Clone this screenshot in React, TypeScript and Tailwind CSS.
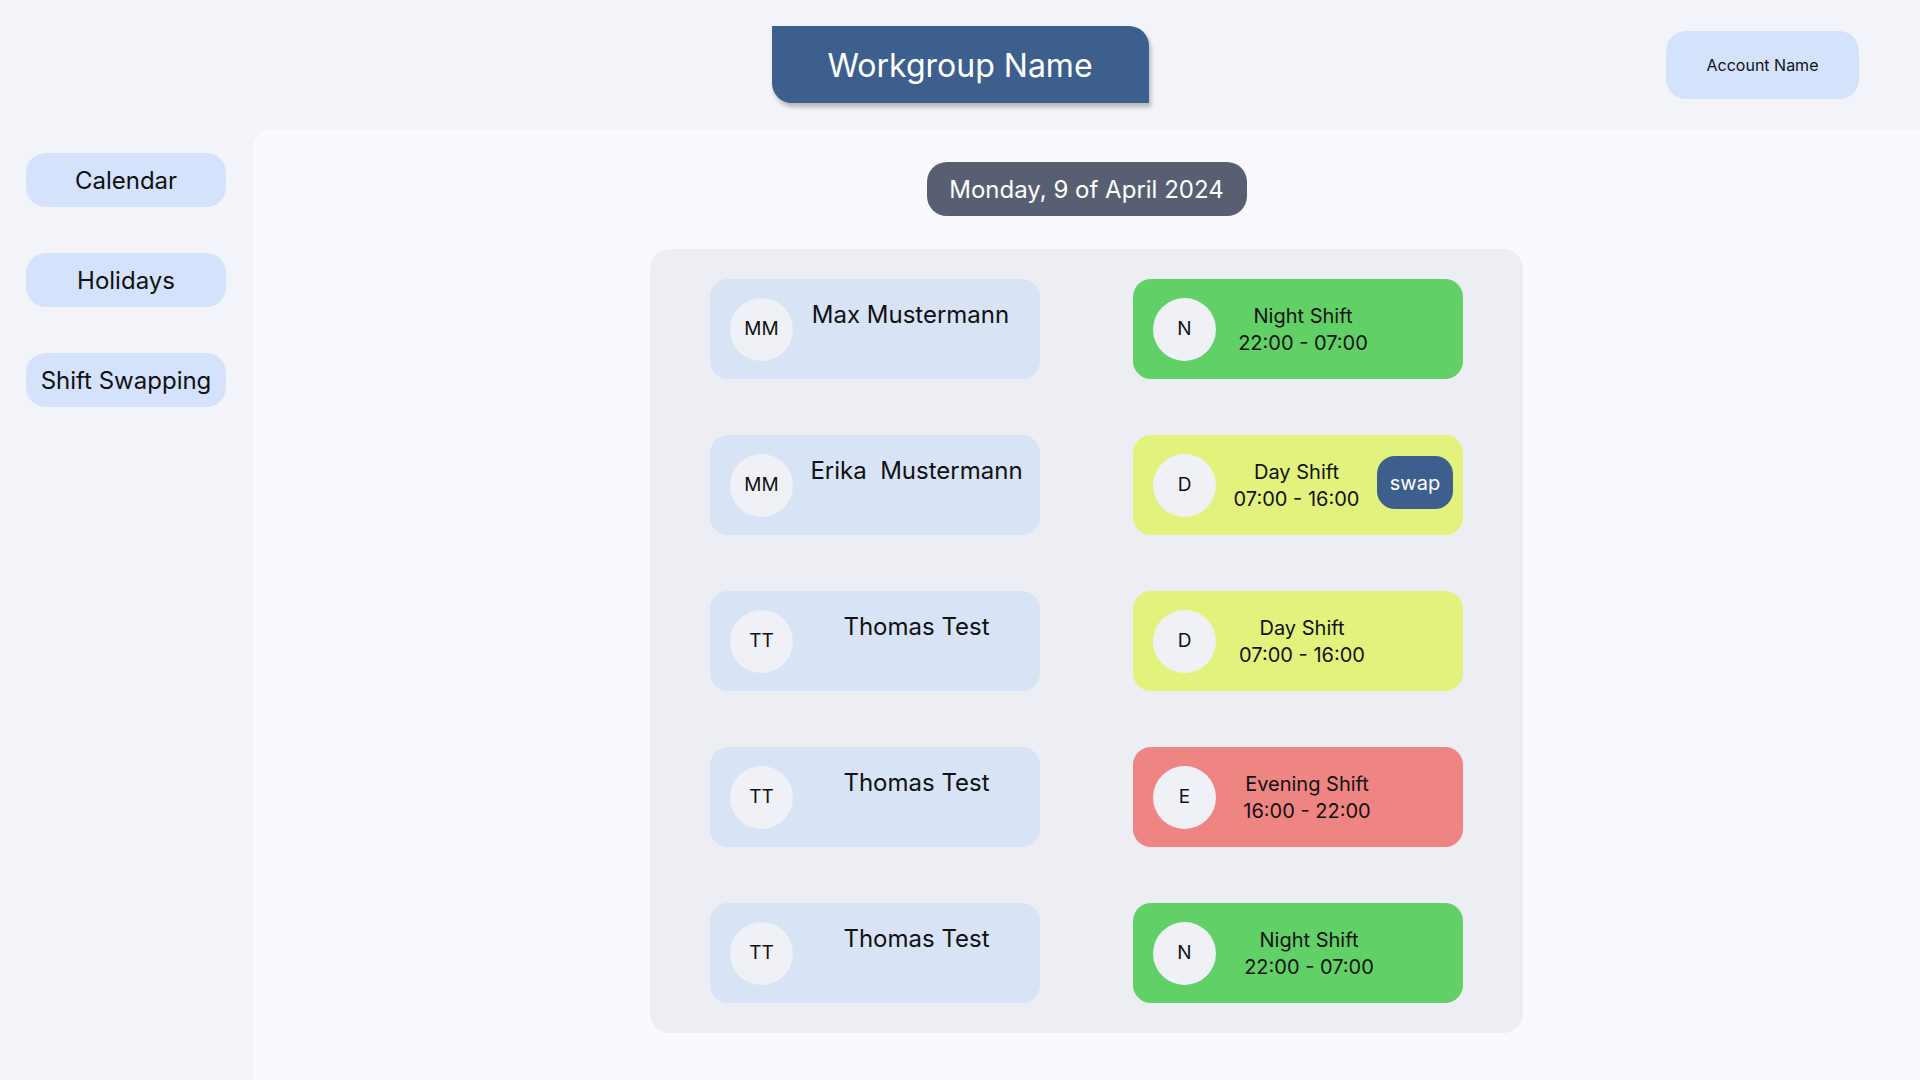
import React from 'react';

type Shift = 'night' | 'day' | 'evening';

interface Row {
    initials: string;
    name: string;
    shift: Shift;
    nameCls: string;
    textCls: string;
    swap?: boolean;
}

// text blocks are not perfectly aligned in the design, so each row keeps its own width
const rows: Row[] = [
    { initials: 'MM', name: 'Max Mustermann', shift: 'night', nameCls: 'pr-[12px]', textCls: 'w-[174px]' },
    { initials: 'MM', name: 'Erika\u00a0 Mustermann', shift: 'day', nameCls: '', textCls: 'w-[161px]', swap: true },
    { initials: 'TT', name: 'Thomas Test', shift: 'day', nameCls: '', textCls: 'w-[172px]' },
    { initials: 'TT', name: 'Thomas Test', shift: 'evening', nameCls: '', textCls: 'w-[182px]' },
    { initials: 'TT', name: 'Thomas Test', shift: 'night', nameCls: '', textCls: 'w-[186px]' },
];

const shiftInfo: Record<Shift, { letter: string; label: string; time: string; bg: string }> = {
    night: { letter: 'N', label: 'Night Shift', time: '22:00 - 07:00', bg: 'bg-[#61d067]' },
    day: { letter: 'D', label: 'Day Shift', time: '07:00 - 16:00', bg: 'bg-[#e2f27d]' },
    evening: { letter: 'E', label: 'Evening Shift', time: '16:00 - 22:00', bg: 'bg-[#ee8583]' },
};

const navItems = ['Calendar', 'Holidays', 'Shift Swapping'];

const Avatar: React.FC<{ text: string }> = ({ text }) => (
    <div className="w-[63px] h-[63px] shrink-0 rounded-full bg-[#f0f1f6] flex items-center justify-center text-[19px] text-[#111]">
        {text}
    </div>
);

const App: React.FC = () => {
    return (
        <div className="h-screen w-full overflow-hidden bg-[#f2f4f9] font-['Inter','Liberation_Sans',sans-serif] text-[#111] flex flex-col">
            {/* Top bar */}
            <header className="h-[130px] shrink-0 grid grid-cols-[1fr_auto_1fr] items-start">
                <div />
                <div className="mt-[26px] w-[377px] h-[77px] pt-[2px] bg-[#3d5f8e] text-white text-[32px] flex items-center justify-center rounded-tr-[20px] rounded-bl-[20px] shadow-[2px_4px_4px_rgba(0,0,0,0.25)]">
                    Workgroup Name
                </div>
                <div className="flex justify-end pr-[61px] pt-[31px]">
                    <div className="w-[193px] h-[68px] rounded-[20px] bg-[#d4e2fc] flex items-center justify-center text-[16px]">
                        Account Name
                    </div>
                </div>
            </header>

            <div className="flex flex-1 min-h-0">
                {/* Sidebar */}
                <aside className="w-[253px] shrink-0 pl-[26px] pt-[23px] flex flex-col gap-[46px]">
                    {navItems.map(item => (
                        <div
                            key={item}
                            className="w-[200px] h-[54px] pt-[2px] rounded-[20px] bg-[#d4e2fc] flex items-center justify-center text-[24px]"
                        >
                            {item}
                        </div>
                    ))}
                </aside>

                {/* Main */}
                <main className="flex-1 bg-[#f9f9fe] rounded-tl-[16px] flex flex-col items-center pt-[32px]">
                    <div className="w-[320px] h-[54px] pt-[2px] rounded-[20px] bg-[#585f72] text-white text-[24px] flex items-center justify-center">
                        Monday, 9 of April 2024
                    </div>

                    <div className="mt-[33px] w-[873px] rounded-[20px] bg-[#edeef3] px-[60px] py-[30px] flex flex-col gap-[56px]">
                        {rows.map((row, i) => {
                            const s = shiftInfo[row.shift];
                            return (
                                <div key={i} className="flex justify-between">
                                    {/* Person */}
                                    <div className="w-[330px] h-[100px] rounded-[18px] bg-[#d8e3f6] flex items-center pl-5">
                                        <Avatar text={row.initials} />
                                        <div className={`flex-1 self-start pt-[21px] text-center text-[24px] leading-[29px] whitespace-pre ${row.nameCls}`}>
                                            {row.name}
                                        </div>
                                    </div>

                                    {/* Shift */}
                                    <div className={`w-[330px] h-[100px] rounded-[18px] ${s.bg} flex items-center pl-5`}>
                                        <Avatar text={s.letter} />
                                        <div className={`${row.textCls} pt-[2px] text-center text-[20px] leading-[27px]`}>
                                            <div>{s.label}</div>
                                            <div>{s.time}</div>
                                        </div>
                                        {row.swap && (
                                            <button className="self-start mt-[21px] w-[76px] h-[53px] rounded-[18px] bg-[#3d5f8e] text-white text-[20px] flex items-center justify-center">
                                                swap
                                            </button>
                                        )}
                                    </div>
                                </div>
                            );
                        })}
                    </div>
                </main>
            </div>
        </div>
    );
};

export default App;
